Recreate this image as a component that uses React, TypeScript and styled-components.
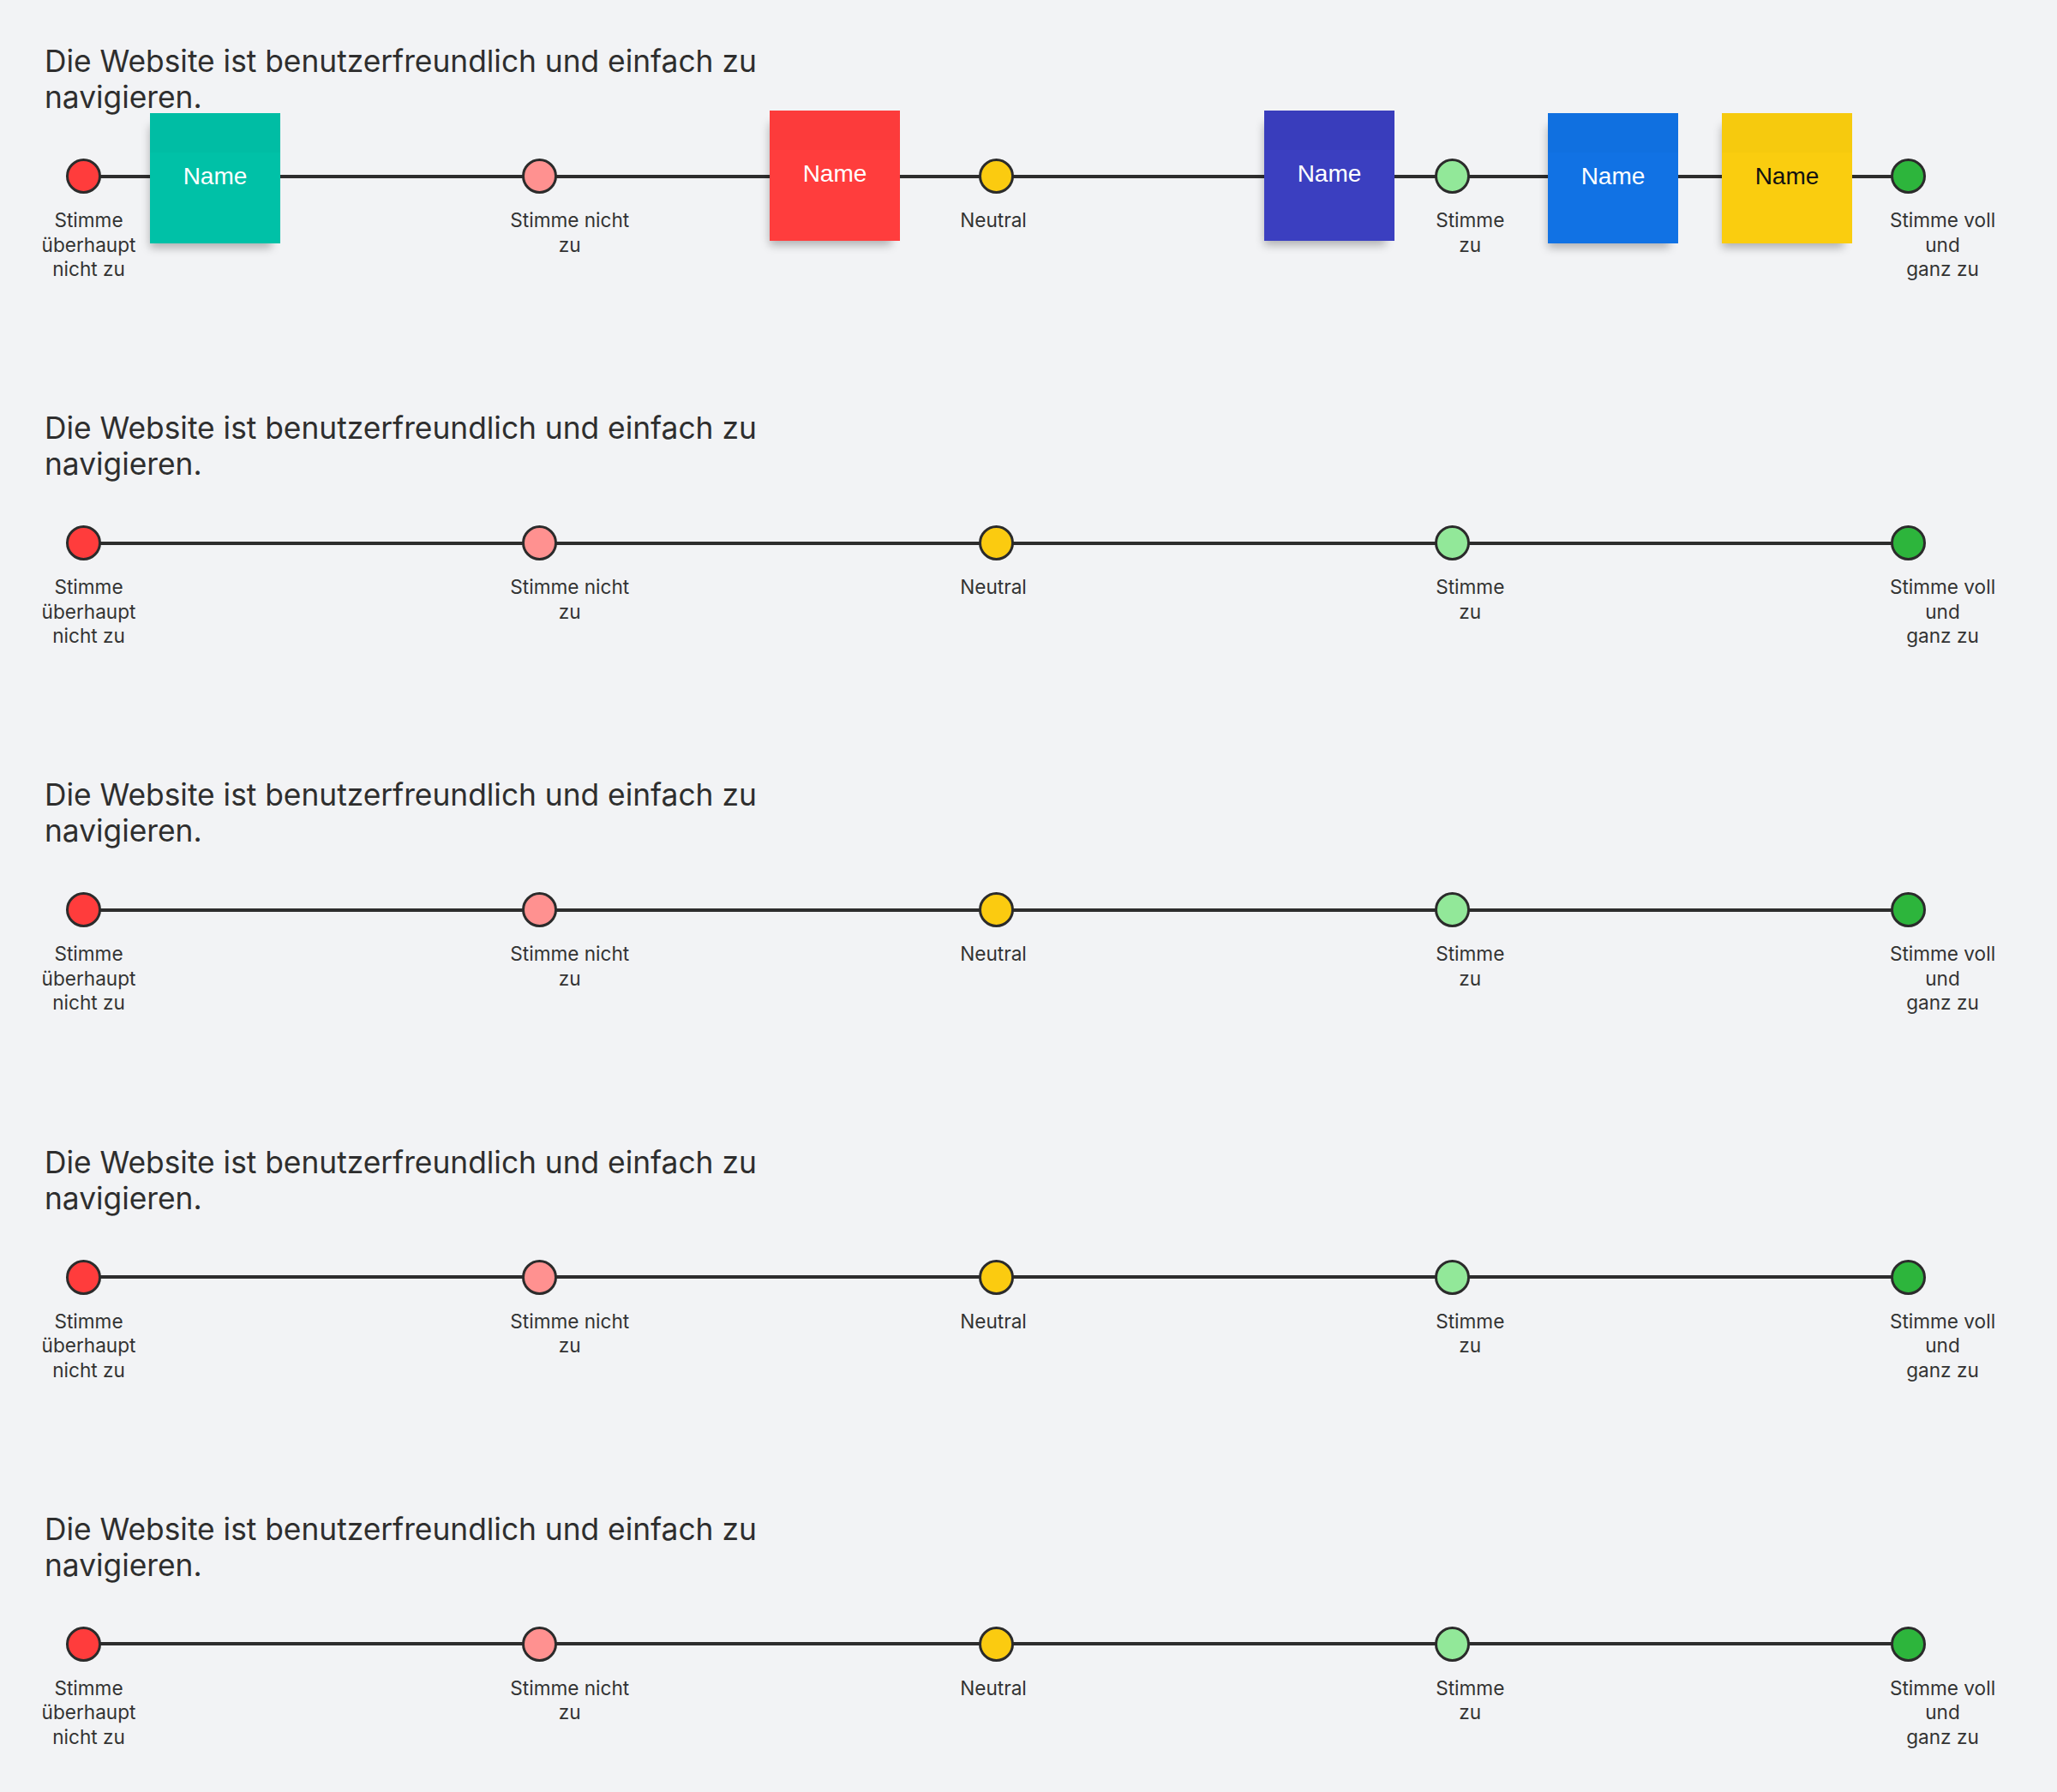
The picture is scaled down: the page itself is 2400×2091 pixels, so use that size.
import React from 'react'
import styled, { createGlobalStyle } from 'styled-components'

const GlobalStyle = createGlobalStyle`
  html, body {
    margin: 0;
    padding: 0;
    background: #f2f3f5;
  }
  body {
    font-family: Inter, "Noto Sans", sans-serif;
  }
`

const Board = styled.main`
  width: 2400px;
  min-height: 2091px;
  padding-top: 48px;
  box-sizing: border-box;
`

const Section = styled.section`
  height: 428.2px;
  display: flex;
  flex-direction: column;
`

const Question = styled.h2`
  margin: 0 0 50px 52px;
  padding-top: 3px;
  font-family: Inter, sans-serif;
  font-weight: 400;
  font-size: 35.3px;
  line-height: 42px;
  color: #2e2e2e;
  white-space: nowrap;
`

const Track = styled.div`
  position: relative;
  margin-left: 77px;
  width: 2170px;
  display: flex;
  justify-content: space-between;

  &::before {
    content: '';
    position: absolute;
    left: 20px;
    right: 20px;
    top: 18.5px;
    height: 4px;
    background: #2d2d2d;
  }
`

const Stop = styled.div`
  position: relative;
  z-index: 1;
  width: 41px;
  display: flex;
  flex-direction: column;
  align-items: center;
`

const Dot = styled.div<{ $fill: string }>`
  width: 41px;
  height: 41px;
  box-sizing: border-box;
  border-radius: 50%;
  border: 3.5px solid #2b2b2b;
  background: ${p => p.$fill};
`

const Label = styled.div<{ $shift: number }>`
  margin-top: 17px;
  transform: translateX(${p => p.$shift}px);
  font-family: Inter, sans-serif;
  font-size: 22.6px;
  line-height: 28.5px;
  color: #333333;
  text-align: center;
  white-space: nowrap;
`

const Sticky = styled.div<{ $bg: string; $top: string; $ink: string }>`
  position: absolute;
  z-index: 2;
  width: 152px;
  height: 152px;
  padding-bottom: 3px;
  box-sizing: border-box;
  display: flex;
  align-items: center;
  justify-content: center;
  background: linear-gradient(180deg, ${p => p.$top} 0, ${p => p.$top} 46px, ${p => p.$bg} 46px);
  box-shadow: -5px 10px 10px -5px rgba(0, 0, 0, 0.28);
  font-family: "Liberation Sans", Arial, sans-serif;
  font-size: 28px;
  color: ${p => p.$ink};
`

const stops = [
  { fill: '#ff3c3c', shift: 6, text: ['Stimme', 'überhaupt', 'nicht zu'] },
  { fill: '#ff9190', shift: 35, text: ['Stimme nicht', 'zu'] },
  { fill: '#fbcb10', shift: -3, text: ['Neutral'] },
  { fill: '#92e899', shift: 21, text: ['Stimme', 'zu'] },
  { fill: '#2db53c', shift: 40, text: ['Stimme voll', 'und', 'ganz zu'] },
]

const stickies = [
  { x: 98, y: -53.5, bg: '#00c1a7', top: '#00bda4', ink: '#ffffff' },
  { x: 821, y: -56.5, bg: '#ff3d3d', top: '#fc3b3b', ink: '#ffffff' },
  { x: 1398, y: -56.5, bg: '#3b3fc0', top: '#393dbc', ink: '#ffffff' },
  { x: 1729, y: -53.5, bg: '#1172e4', top: '#1070e0', ink: '#ffffff' },
  { x: 1932, y: -53.5, bg: '#facd0f', top: '#f6ca0e', ink: '#111111' },
]

function Scale({ withNotes }: { withNotes?: boolean }) {
  return (
    <Section>
      <Question>
        Die Website ist benutzerfreundlich und einfach zu
        <br />
        navigieren.
      </Question>
      <Track>
        {stops.map((s, i) => (
          <Stop key={i}>
            <Dot $fill={s.fill} />
            <Label $shift={s.shift}>
              {s.text.map((line, j) => (
                <React.Fragment key={j}>
                  {j > 0 && <br />}
                  {line}
                </React.Fragment>
              ))}
            </Label>
          </Stop>
        ))}
        {withNotes &&
          stickies.map((n, i) => (
            <Sticky
              key={i}
              $bg={n.bg}
              $top={n.top}
              $ink={n.ink}
              style={{ left: n.x, top: n.y }}
            >
              Name
            </Sticky>
          ))}
      </Track>
    </Section>
  )
}

export default function App() {
  return (
    <>
      <GlobalStyle />
      <Board>
        <Scale withNotes />
        <Scale />
        <Scale />
        <Scale />
        <Scale />
      </Board>
    </>
  )
}
